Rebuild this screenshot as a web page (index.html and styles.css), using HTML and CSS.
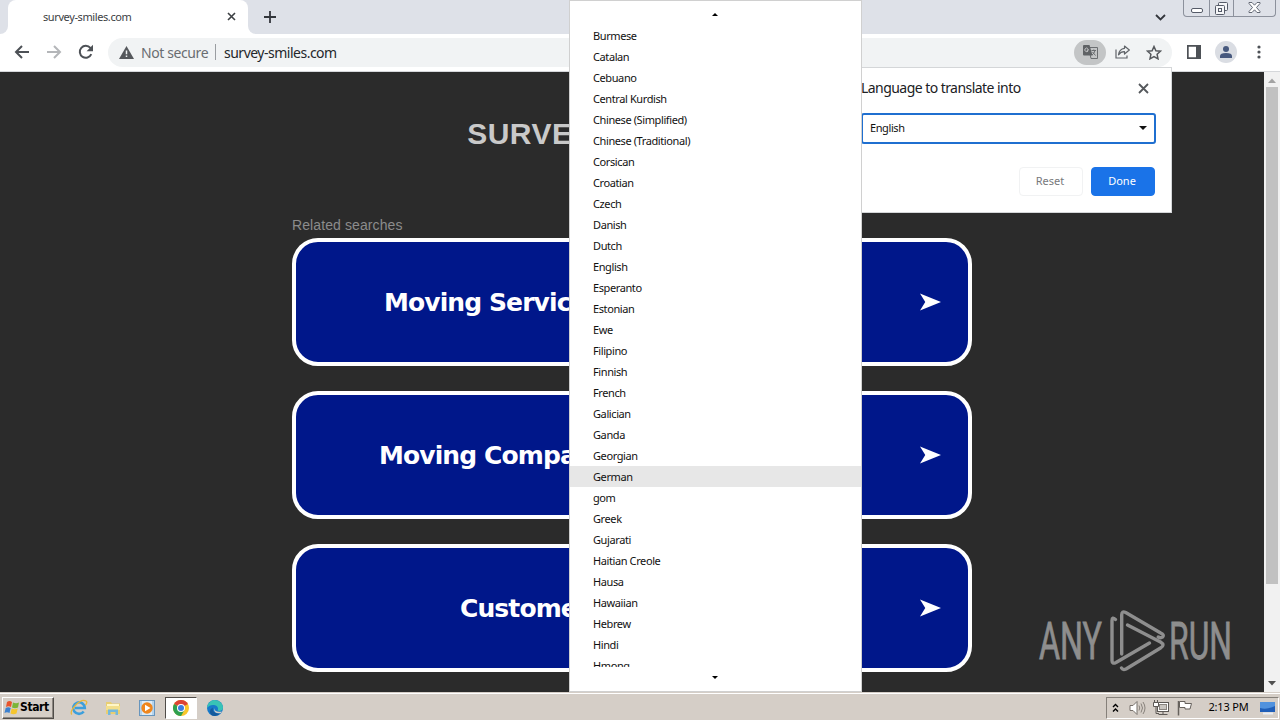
FILE: index.html
```
<!DOCTYPE html>
<html lang="en">
<head>
    <meta charset="UTF-8">
    <meta name="viewport" content="width=device-width, initial-scale=1.0">
    <title>survey-smiles.com</title>
    <link rel="stylesheet" href="styles.css">
</head>
<body>
    <!-- Tab strip -->
    <div class="tabs">
        <div class="tab-prev"></div>
        <div class="tab">
            <span class="tab-title">survey-smiles.com</span>
            <svg width="9" height="9" viewBox="0 0 9 9"><path d="M1 1l7 7M8 1l-7 7" stroke="#3c4043" stroke-width="1.6"/></svg>
        </div>
        <div class="tab-next"></div>
        <svg class="new-tab" width="12" height="12" viewBox="0 0 12 12"><path d="M6 0v12M0 6h12" stroke="#33363c" stroke-width="1.8"/></svg>
        <svg class="tab-search" width="11" height="7" viewBox="0 0 11 7"><path d="M1 1l4.5 4.5L10 1" fill="none" stroke="#33363c" stroke-width="1.8"/></svg>
        <div class="win-buttons">
            <div class="win-btn"><svg width="12" height="5" viewBox="0 0 12 5"><rect x=".5" y=".5" width="11" height="4" rx="1.5" fill="#fff" stroke="#555b68"/></svg></div>
            <div class="win-btn win-max"><svg width="13" height="13" viewBox="0 0 13 13"><g fill="#f5f6f8" stroke="#555b68"><rect x="3.5" y=".5" width="9" height="8" rx="1"/><rect x=".5" y="3.5" width="9" height="9" rx="1"/><rect x="3.5" y="6.5" width="3" height="3"/></g></svg></div>
            <div class="win-btn win-close"><svg width="13" height="11" viewBox="0 0 13 11"><path d="M1 .5h3l2.5 2.700L9 .5h3v1L8.500 5.500l3.500 4v1H9L6.500 7.800 4 10.500H1v-1l3.500-4L1 1.500z" fill="#fff" stroke="#555b68" stroke-width=".9"/></svg></div>
        </div>
    </div>

    <!-- Toolbar -->
    <div class="toolbar">
        <svg class="nav" width="16" height="14" viewBox="0 0 16 14"><path d="M15 7H2M8 1L2 7l6 6" fill="none" stroke="#4d5156" stroke-width="2"/></svg>
        <svg class="nav" width="16" height="14" viewBox="0 0 16 14"><path d="M1 7h13M8 1l6 6-6 6" fill="none" stroke="#b4b6b9" stroke-width="2"/></svg>
        <svg class="nav" width="16" height="16" viewBox="0 0 16 16"><path d="M13.300 10.200A6 6 0 1 1 12.400 3.900L14 5.500" fill="none" stroke="#4d5156" stroke-width="2"/><path d="M15 .8v6.400H8.600z" fill="#4d5156"/></svg>
        <div class="address">
            <svg width="15" height="13" viewBox="0 0 15 13"><path d="M7.500 0L15 13H0z" fill="#55585c"/><path d="M7.500 4.500v3.800M7.500 9.500v1.600" stroke="#f1f3f4" stroke-width="1.500"/></svg>
            <span class="not-secure">Not secure</span>
            <span class="divider"></span>
            <span class="url">survey-smiles.com</span>
            <div class="translate">
                <svg width="15" height="14" viewBox="0 0 15 14"><path d="M5.500 2.500h9v11H8z" fill="none" stroke="#6b6e71"/><path d="M1 0h5.500l3 10.500H1a1 1 0 0 1-1-1V1a1 1 0 0 1 1-1z" fill="#5f6265"/><path d="M6 4.800H4.300v1.100h.8A1.800 1.800 0 1 1 4.800 3.500" fill="none" stroke="#c3c4c5"/><path d="M8.500 5.500H13M10.800 4.500v1M12 5.500q-.7 3-3 4.500M9.500 7l3 3.500" fill="none" stroke="#6b6e71"/></svg>
            </div>
            <svg class="share" width="15" height="14" viewBox="0 0 15 14"><path d="M1 4.500V13h11v-2.500" fill="none" stroke="#5f6368" stroke-width="1.200"/><path d="M9.500 1l4.800 4-4.800 4V6.600Q5.800 6.500 3.500 9.800 4.200 4 9.500 3.300z" fill="none" stroke="#5f6368" stroke-width="1.200" stroke-linejoin="round"/></svg>
            <svg class="star" width="16" height="15" viewBox="0 0 16 15"><path d="M8 1.500l1.900 4.200 4.600.5-3.400 3.100.9 4.500L8 11.500l-4 2.300.9-4.500-3.400-3.100 4.600-.5z" fill="none" stroke="#55585c" stroke-width="1.500"/></svg>
        </div>
        <svg class="side-panel" width="14" height="14" viewBox="0 0 14 14"><path d="M0 0h14v14H0zM1.700 1.700v10.600H9V1.700z" fill="#4d5156" fill-rule="evenodd"/></svg>
        <div class="avatar">
            <svg width="12" height="12" viewBox="0 0 12 12"><circle cx="6" cy="3" r="3" fill="#47597e"/><path d="M0 12v-2q0-3 6-3t6 3v2z" fill="#47597e"/></svg>
        </div>
        <svg class="dots" width="4" height="14" viewBox="0 0 4 14"><g fill="#4d5156"><circle cx="2" cy="2" r="1.600"/><circle cx="2" cy="7" r="1.600"/><circle cx="2" cy="12" r="1.600"/></g></svg>
    </div>

    <!-- Page -->
    <div class="viewport">
        <div class="page">
            <h1>SURVEY-SMILES.COM</h1>
            <div class="related">Related searches</div>
            <div class="card card-services">
                <span>Moving Services</span>
                <svg width="21" height="18" viewBox="0 0 22 18"><path d="M0 0l22 9-22 9 5.500-9z" fill="#fff"/></svg>
            </div>
            <div class="card card-company">
                <span>Moving Company</span>
                <svg width="21" height="18" viewBox="0 0 22 18"><path d="M0 0l22 9-22 9 5.500-9z" fill="#fff"/></svg>
            </div>
            <div class="card card-customer">
                <span>Customer</span>
                <svg width="21" height="18" viewBox="0 0 22 18"><path d="M0 0l22 9-22 9 5.500-9z" fill="#fff"/></svg>
            </div>
        </div>
        <div class="scrollbar">
            <svg width="16" height="15" viewBox="0 0 16 15"><path d="M4 11l4-4.500 4 4.500z" fill="#a3a3a3"/></svg>
            <div class="thumb"></div>
            <svg class="scroll-down" width="16" height="17" viewBox="0 0 16 17"><path d="M4 6l4 4.500L12 6z" fill="#505050"/></svg>
        </div>
    </div>

    <!-- Taskbar -->
    <div class="taskbar">
        <div class="start">
            <svg width="16" height="15" viewBox="0 0 16 15"><path d="M3 2q2.500-2 5 0L7 7Q4.500 5.500 2 7z" fill="#e8542c"/><path d="M9 2.500q3 1.500 6 0L14 7.500q-3 1.500-6 0z" fill="#7bb539"/><path d="M1.700 8q2.500-1.500 5 0l-1.200 5Q3 11.500.5 13z" fill="#3c80cf"/><path d="M7.700 8.500q3 1.500 6 0l-1.200 5q-3 1.500-6 0z" fill="#f5c52e"/></svg>
            <span>Start</span>
        </div>
        <div class="task">
            <svg width="18" height="18" viewBox="0 0 18 18"><path d="M13.700 12.500A5.800 5.800 0 1 1 14.800 9H5" fill="none" stroke="#3d9fdc" stroke-width="2.600"/><path d="M1.800 15.500C-1 12 10-1 16 2q1.800 1.200-.5 4" fill="none" stroke="#e8b73b" stroke-width="1.300"/></svg>
        </div>
        <div class="task">
            <svg width="16" height="16" viewBox="0 0 16 16"><path d="M1 2h5l1 1.500h8V14H1z" fill="#e8ce72"/><path d="M2 4h12v3H2z" fill="#fff6c7"/><path d="M1 6h14v4H1z" fill="#f3df8c"/><path d="M3 15V9.500h10V15h-2.500v-3h-5v3z" fill="#73b8dc"/></svg>
        </div>
        <div class="task">
            <svg width="16" height="16" viewBox="0 0 16 16"><rect x=".5" y=".5" width="15" height="15" fill="#b5d3ec" stroke="#6795bd"/><rect x="3" y="1" width="10" height="14" fill="#ddecf7"/><circle cx="8" cy="8" r="5.700" fill="#ef861d"/><path d="M6 4.700L11.500 8 6 11.300z" fill="#fff"/></svg>
        </div>
        <div class="task task-active">
            <svg width="16" height="16" viewBox="0 0 16 16"><circle cx="8" cy="8" r="8" fill="#f9c62a"/><path d="M8 8L1.070 4A8 8 0 0 1 14.930 4z" fill="#dc4335"/><path d="M8 8L1.070 4A8 8 0 0 0 8 16l3.500-6z" fill="#2fa050"/><circle cx="8" cy="8" r="4" fill="#fff"/><circle cx="8" cy="8" r="3" fill="#3b7de0"/></svg>
        </div>
        <div class="task">
            <svg width="16" height="16" viewBox="0 0 16 16"><circle cx="8" cy="8" r="8" fill="#1779c9"/><path d="M.3 6A8 8 0 0 1 16 7.500c0 3-3 4-5.500 3 1.800-3-1-5.500-4.500-5.500Q2 5 .3 8z" fill="#38c3b6"/><path d="M6 7.500c-1.500 4 3 7 7.500 5.500Q9 18 4 14.700 1 10 6 7.500z" fill="#155a9c"/><path d="M7.200 8q0 4.500 7.500 3.500l-1 1.800Q6 14 7.200 8z" fill="#d6cfc7"/></svg>
        </div>
        <div class="tray">
            <svg width="7" height="10" viewBox="0 0 7 10"><path d="M1 4l2.500-2.500L6 4M1 8.500L3.500 6 6 8.500" fill="none" stroke="#000" stroke-width="1.400"/></svg>
            <svg class="tray-sound" width="17" height="16" viewBox="0 0 17 16"><path d="M1 5.500h3L8 1.500v13l-4-4H1z" fill="#fff" stroke="#77716b"/><path d="M10 5.500q1.500 2.500 0 5M12 3.500q3 4.500 0 9M14 2q4 6 0 12" fill="none" stroke="#88827c"/></svg>
            <svg class="tray-net" width="16" height="16" viewBox="0 0 16 16"><rect x="4.500" y="2.500" width="11" height="9" fill="#fff" stroke="#5d5955"/><rect x="6.500" y="4.500" width="7" height="5" fill="#c9c5c0" stroke="#8a8580"/><path d="M5.500 14.500h9M10 12v2" stroke="#5d5955"/><path d="M.5 2.500h5v4h-5zM1.500 0v2M4.500 0v2" fill="#fff" stroke="#5d5955"/><path d="M3 7v6.500h3" fill="none" stroke="#5d5955"/></svg>
            <svg class="tray-flag" width="16" height="16" viewBox="0 0 16 16"><path d="M1.500 1v14.500" stroke="#66615c" stroke-width="1.500"/><path d="M2.500 1.500h5.500v2h6.500L13 9H8V7.500H2.500z" fill="#fff" stroke="#66615c"/></svg>
            <span class="clock">2:13 PM</span>
            <svg width="16" height="14" viewBox="0 0 16 14"><path d="M0 1h15v10H0z" fill="#1f5eb8"/><path d="M0 1h15v4Q7 9 0 7z" fill="#5192de"/><path d="M3 12.500h10" stroke="#e9eef5" stroke-width="2"/></svg>
        </div>
    </div>

    <!-- Watermark over the page -->
    <svg class="watermark" width="204" height="64" viewBox="0 0 204 64">
        <g class="watermark-text">
            <text x="4" y="50" textLength="63" lengthAdjust="spacingAndGlyphs">ANY</text>
            <text x="134" y="50" textLength="63" lengthAdjust="spacingAndGlyphs">RUN</text>
        </g>
        <g fill="none" stroke="#8e8e8e" stroke-width="3.400" stroke-linejoin="round" stroke-linecap="round">
            <path d="M80.500 10.500q-3.500-3-3.500 1v40q0 4 4 2L114.500 34"/>
            <path d="M86.700 45V6q0-4.500 4-2.500l35 20.500q4 2 2 4-2 1.500-4.500 0"/>
            <path d="M92.500 16l33 17q5 3 0 6L91 60q-3 1.500-4.500-1"/>
        </g>
    </svg>

    <!-- Translate dialog -->
    <div class="dialog">
        <div class="dialog-head">
            <span>Language to translate into</span>
            <svg width="11" height="11" viewBox="0 0 11 11"><path d="M1 1l9 9M10 1l-9 9" stroke="#55585c" stroke-width="1.800"/></svg>
        </div>
        <div class="select">
            <span>English</span>
            <svg width="8" height="4" viewBox="0 0 8 4"><path d="M0 0h8L4 4z" fill="#111"/></svg>
        </div>
        <div class="actions">
            <div class="btn">Reset</div>
            <div class="btn btn-done">Done</div>
        </div>
    </div>

    <!-- Language list -->
    <div class="menu">
        <div class="menu-up"><svg width="6" height="3" viewBox="0 0 6 3"><path d="M0 3l3-3 3 3z"/></svg></div>
        <ul>
            <li>Burmese</li>
            <li>Catalan</li>
            <li>Cebuano</li>
            <li>Central Kurdish</li>
            <li>Chinese (Simplified)</li>
            <li>Chinese (Traditional)</li>
            <li>Corsican</li>
            <li>Croatian</li>
            <li>Czech</li>
            <li>Danish</li>
            <li>Dutch</li>
            <li>English</li>
            <li>Esperanto</li>
            <li>Estonian</li>
            <li>Ewe</li>
            <li>Filipino</li>
            <li>Finnish</li>
            <li>French</li>
            <li>Galician</li>
            <li>Ganda</li>
            <li>Georgian</li>
            <li class="selected">German</li>
            <li>gom</li>
            <li>Greek</li>
            <li>Gujarati</li>
            <li>Haitian Creole</li>
            <li>Hausa</li>
            <li>Hawaiian</li>
            <li>Hebrew</li>
            <li>Hindi</li>
            <li>Hmong</li>
        </ul>
        <div class="menu-down"><svg width="6" height="3" viewBox="0 0 6 3"><path d="M0 0h6L3 3z"/></svg></div>
    </div>
</body>
</html>
```
FILE: styles.css
```
* {
    box-sizing: border-box;
}
body {
    margin: 0;
    width: 1280px;
    height: 720px;
    overflow: hidden;
    display: flex;
    flex-direction: column;
    font-family: "Noto Sans", "Open Sans", sans-serif;
    font-size: 11px;
    color: #111;
    white-space: nowrap;
}
svg {
    display: block;
    flex: none;
}
.tabs {
    height: 34px;
    display: flex;
    background: #dee1e8;
}
.tab-prev {
    width: 8px;
    border-bottom-right-radius: 8px;
    background: #dee1e8;
    box-shadow: 0 8px 0 #fff;
    clip-path: inset(0);
}
.tab {
    width: 240px;
    display: flex;
    align-items: center;
    justify-content: space-between;
    padding: 0 12px 1px 35px;
    background: #fff;
    border-radius: 8px 8px 0 0;
}
.tab-title {
    color: #3c4043;
    letter-spacing: -0.4px;
}
.tab-next {
    width: 8px;
    border-bottom-left-radius: 8px;
    box-shadow: 0 8px 0 #fff;
    clip-path: inset(0);
}
.new-tab {
    margin: 11px 0 0 8px;
}
.tab-search {
    margin: 14px 17px 0 auto;
}
.win-buttons {
    display: flex;
    width: 93px;
    height: 17px;
    margin-right: 4px;
    border: 1px solid #8c919c;
    border-top: 0;
    border-radius: 0 0 4px 4px;
}
.win-btn {
    width: 25px;
    display: flex;
    justify-content: center;
    align-items: flex-end;
    padding-bottom: 3px;
}
.win-max {
    border: 1px solid #8c919c;
    border-width: 0 1px;
    padding-bottom: 1px;
}
.win-close {
    flex: 1;
}
.toolbar {
    height: 38px;
    display: flex;
    align-items: center;
    padding: 0 19px 1px 14px;
    background: #fff;
    border-bottom: 1px solid #d5d7da;
}
.nav {
    margin-right: 16px;
}
.address {
    width: 1064px;
    height: 29px;
    margin-left: -2px;
    display: flex;
    align-items: center;
    padding: 0 10px 0 11px;
    border-radius: 15px;
    background: #f1f3f4;
    font-size: 14px;
}
.not-secure {
    margin-left: 7px;
    width: 68px;
    color: #6a6d71;
    letter-spacing: -0.4px;
}
.divider {
    width: 1px;
    height: 16px;
    margin: 0 8px 0 6px;
    background: #9a9da1;
}
.url {
    color: #24272b;
    letter-spacing: -0.5px;
}
.translate {
    width: 32px;
    height: 25px;
    margin-left: auto;
    display: flex;
    align-items: center;
    justify-content: center;
    border-radius: 13px;
    background: #c3c5c6;
}
.share {
    margin-left: 9px;
}
.star {
    margin-left: 16px;
}
.side-panel {
    margin-left: 15px;
}
.avatar {
    width: 22px;
    height: 22px;
    margin-left: 14px;
    display: flex;
    align-items: center;
    justify-content: center;
    border-radius: 50%;
    background: #dadde3;
}
.dots {
    margin-left: auto;
}
.viewport {
    height: 620px;
    display: flex;
    background: #2b2b2b;
}
.page {
    flex: 1;
    padding: 42px 292px 0;
    overflow: hidden;
}
h1 {
    margin: 0;
    height: 102px;
    text-align: center;
    font: bold 30px/40px "Liberation Sans", Arial, sans-serif;
    color: #c9c9c9;
    letter-spacing: 0.5px;
}
.related {
    height: 22px;
    font: 14px/18px "Liberation Sans", Arial, sans-serif;
    letter-spacing: 0.1px;
    color: #8c8c8c;
}
.card {
    height: 128px;
    margin-bottom: 25px;
    display: flex;
    align-items: center;
    justify-content: space-between;
    padding: 0 27px 0 88px;
    border: 4px solid #fff;
    border-radius: 26px;
    background: #00178a;
    color: #fff;
    font: bold 25px "DejaVu Sans", Verdana, sans-serif;
    letter-spacing: -0.9px;
}
.card-company {
    padding-left: 83px;
}
.card-customer {
    padding-left: 164px;
}
.scrollbar {
    width: 16px;
    display: flex;
    flex-direction: column;
    background: #f1f1f1;
}
.thumb {
    width: 12px;
    height: 497px;
    margin-left: 2px;
    background: #c1c1c1;
}
.scroll-down {
    margin-top: auto;
}
.taskbar {
    height: 28px;
    display: flex;
    align-items: center;
    padding: 2px 1px 0 2px;
    border-top: 1px solid #d5cec7;
    box-shadow: inset 0 1px #fff;
    background: #d5cec7;
}
.start {
    width: 52px;
    height: 22px;
    display: flex;
    align-items: center;
    padding-left: 1px;
    border: 1px solid;
    border-color: #fff #504c48 #504c48 #fff;
    box-shadow: inset -1px -1px #8d8781;
    color: #000;
    font: bold 12px "DejaVu Sans Condensed", sans-serif;
    letter-spacing: -0.4px;
}
.start span {
    padding-bottom: 1px;
}
.task {
    width: 32px;
    height: 22px;
    margin-left: 2px;
    display: flex;
    align-items: center;
    justify-content: center;
}
.start + .task {
    margin-left: 9px;
}
.task-active {
    border: 1px solid;
    border-color: #504c48 #fff #fff #504c48;
    background: #fff;
}
.tray {
    width: 173px;
    height: 22px;
    margin-left: auto;
    display: flex;
    align-items: center;
    padding: 0 2px 0 5px;
    border: 1px solid;
    border-color: #85807a #fff #fff #85807a;
}
.tray-sound {
    margin-left: 10px;
}
.tray-net {
    margin-left: 7px;
}
.tray-flag {
    margin-left: 8px;
}
.clock {
    margin: 0 auto;
    padding: 0 0 2px 4px;
    color: #000;
    letter-spacing: -0.2px;
}
.watermark {
    position: absolute;
    left: 1035px;
    top: 609px;
}
.watermark-text {
    font-family: Roboto, sans-serif;
    font-size: 52px;
    fill: #8e8e8e;
    stroke: #8e8e8e;
    stroke-width: 0.8px;
}
.dialog {
    position: absolute;
    left: 850px;
    top: 67px;
    width: 322px;
    height: 146px;
    padding: 0 15px 0 10px;
    background: #fff;
    border: 1px solid #d4d6d8;
}
.dialog-head {
    height: 40px;
    display: flex;
    align-items: center;
    justify-content: space-between;
    padding-right: 7px;
    font-size: 14px;
    letter-spacing: -0.55px;
    color: #202124;
}
.dialog-head span {
    padding-bottom: 1px;
}
.select {
    height: 31px;
    margin-top: 5px;
    display: flex;
    align-items: center;
    justify-content: space-between;
    padding: 0 7px 1px 7px;
    border: 2px solid #1f6fd0;
    border-radius: 3px;
    letter-spacing: -0.4px;
}
.select span {
    padding-bottom: 1px;
}
.actions {
    display: flex;
    justify-content: flex-end;
    gap: 8px;
    margin: 23px 1px 0 0;
}
.btn {
    width: 64px;
    height: 29px;
    padding-right: 2px;
    border: 1px solid #f1f2f3;
    border-radius: 4px;
    text-align: center;
    line-height: 26px;
    color: #77797c;
}
.btn-done {
    border-color: #1a73e8;
    background: #1a73e8;
    color: #fff;
}
.menu {
    position: absolute;
    left: 569px;
    top: 0;
    width: 293px;
    height: 692px;
    background: #fff;
    border: 1px solid #d0d0d0;
}
.menu-up,
.menu-down {
    height: 24px;
    display: flex;
    justify-content: center;
    padding: 12px 2px 0 0;
}
.menu-down {
    padding-top: 9px;
}
.menu ul {
    height: 642px;
    margin: 0;
    padding: 0;
    overflow: hidden;
    list-style: none;
}
.menu li {
    height: 21px;
    padding-left: 23px;
    line-height: 21px;
    letter-spacing: -0.4px;
}
.menu .selected {
    background: #e7e7e7;
}
```
